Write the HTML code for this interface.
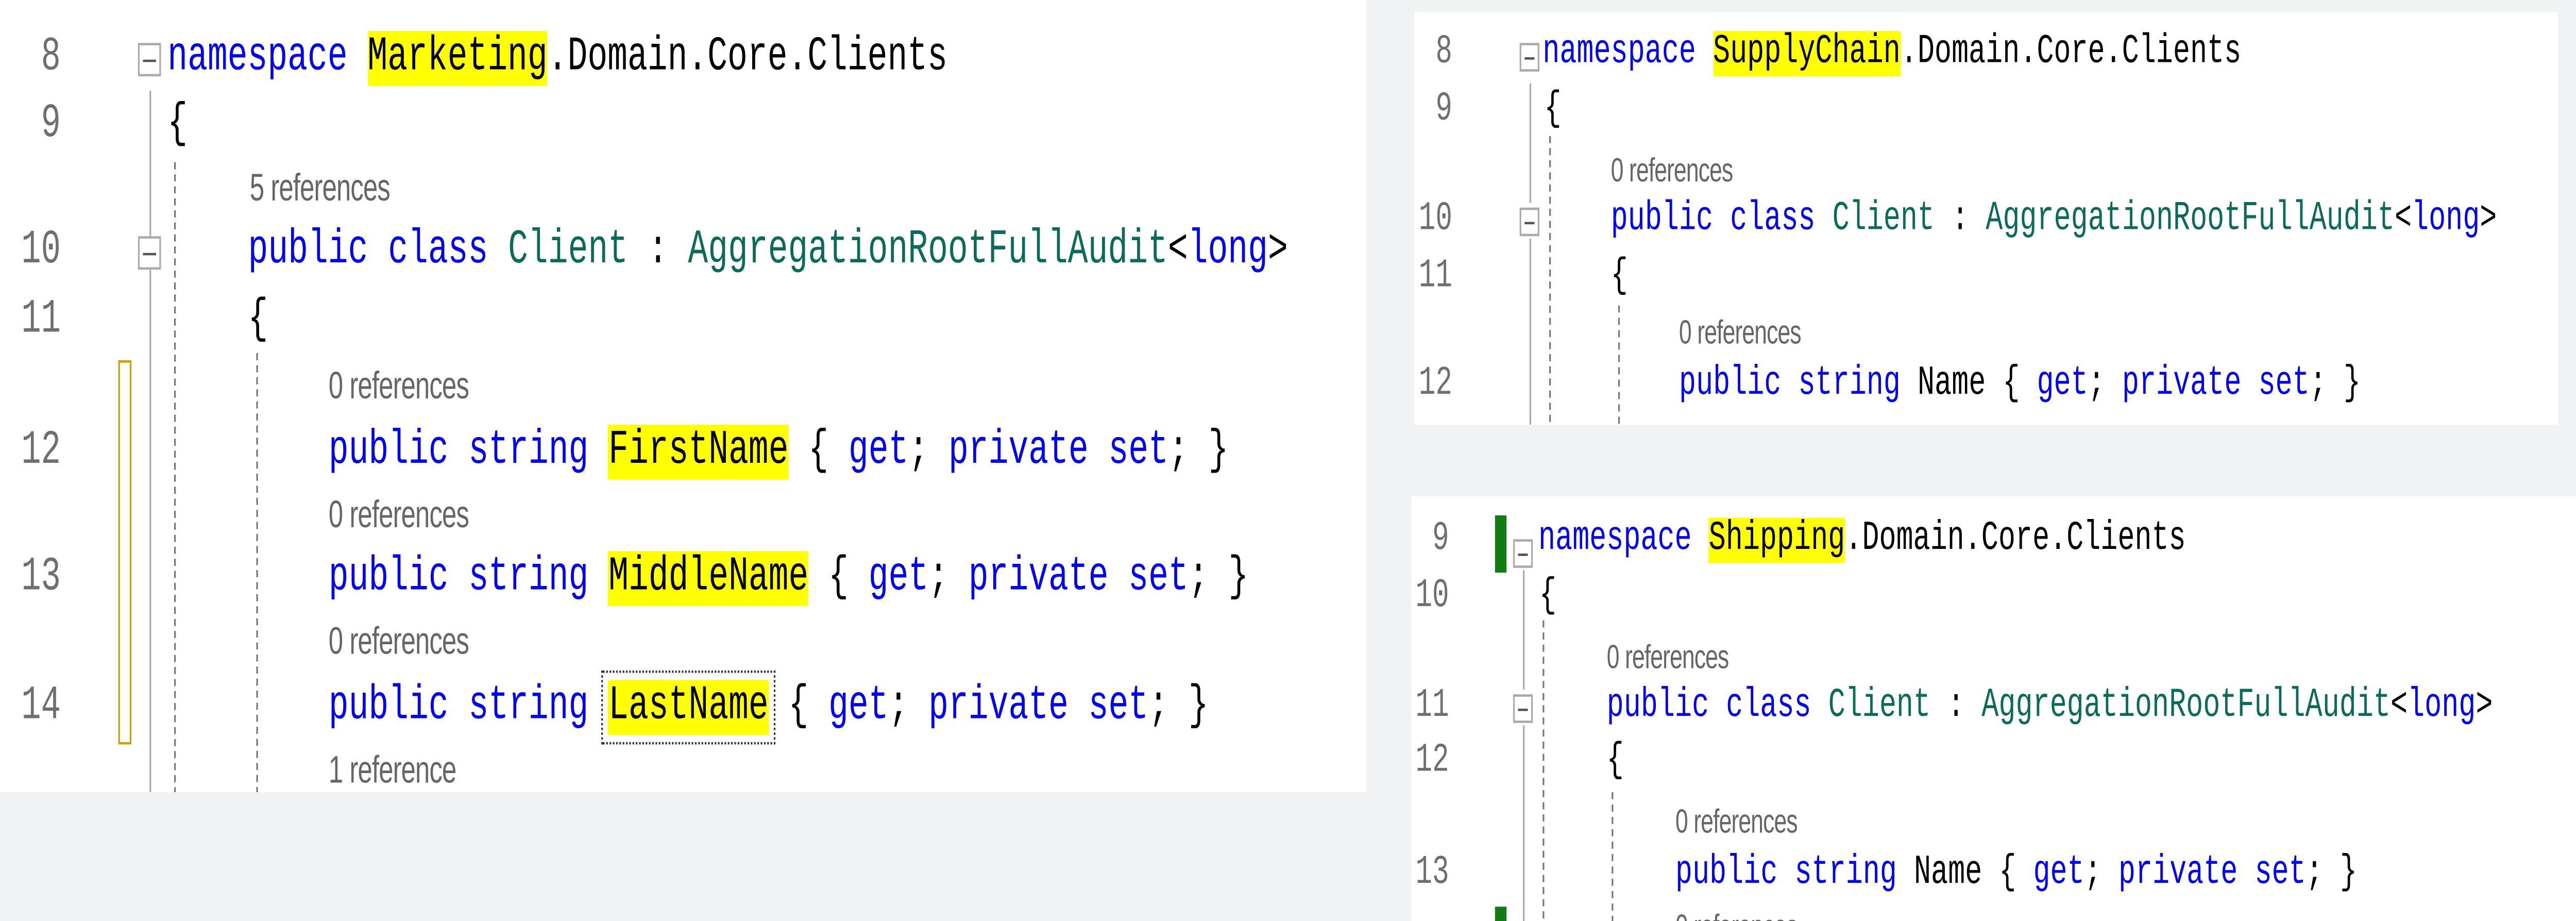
<!DOCTYPE html>
<html><head><meta charset="utf-8"><style>
html,body{margin:0;padding:0;width:100%;height:100%;overflow:hidden;background:#f1f2f4;}
svg.root{position:absolute;left:0;top:0;width:100vw;height:100vh;display:block;}
#s{position:relative;width:1568px;height:386px;background:#f1f2f4;}
.p{position:absolute;background:#fff;overflow:hidden;}
.l{position:absolute;white-space:pre;font-family:"Liberation Mono",monospace;height:30px;line-height:30px;color:#000;}
.L .l{font-size:20.3px;}
.R .l{font-size:17.3px;}
.n{position:absolute;white-space:pre;font-family:"Liberation Mono",monospace;color:#6f6f6f;text-align:right;height:30px;line-height:30px;}
.r{position:absolute;white-space:pre;font-family:"Liberation Sans",sans-serif;color:#666;height:20px;line-height:20px;letter-spacing:-0.3px;}
.k{color:#0000ff}.t{color:#0a6b5a}
.h{background:#ffff00;}
.f{position:absolute;border:1px solid #aaa;background:#fff;box-sizing:border-box;}
.f:after{content:"";position:absolute;left:2px;right:2px;top:50%;height:1px;background:#555;}
.v{position:absolute;width:1px;background:#aaa;}
.d{position:absolute;width:0;border-left:1px dashed #777;}
</style></head><body>
<svg class="root" viewBox="0 0 1568 386" preserveAspectRatio="none" xmlns="http://www.w3.org/2000/svg">
<foreignObject x="0" y="0" width="1568" height="386">
<div xmlns="http://www.w3.org/1999/xhtml" id="s">

<div class="p L" style="left:0;top:0;width:832px;height:332px;">
<div class="n" style="left:0;width:37px;top:-21px;font-size:20px">7</div>
<div class="n" style="left:0;width:37px;top:9.6px;font-size:20px">8</div>
<div class="n" style="left:0;width:37px;top:38px;font-size:20px">9</div>
<div class="n" style="left:0;width:37px;top:91px;font-size:20px">10</div>
<div class="n" style="left:0;width:37px;top:120px;font-size:20px">11</div>
<div class="n" style="left:0;width:37px;top:174.5px;font-size:20px">12</div>
<div class="n" style="left:0;width:37px;top:228px;font-size:20px">13</div>
<div class="n" style="left:0;width:37px;top:281.5px;font-size:20px">14</div>
<div style="position:absolute;left:71.5px;top:150.6px;width:8px;height:161px;border:1.5px solid #c8a200;box-sizing:border-box;"></div>
<div class="v" style="left:91px;top:38px;height:61px"></div>
<div class="v" style="left:91px;top:113px;height:230px"></div>
<div class="f" style="left:84px;top:17.5px;width:14px;height:14px"></div>
<div class="f" style="left:84px;top:99px;width:14px;height:14px"></div>
<div class="d" style="left:106px;top:68px;height:280px"></div>
<div class="d" style="left:156px;top:148px;height:200px"></div>
<div class="l" style="left:102px;top:9.6px"><span class="k">namespace</span> <span class="h">Marketing</span>.Domain.Core.Clients</div>
<div class="l" style="left:102px;top:38px">{</div>
<div class="r" style="left:152px;top:70px;font-size:16px">5 references</div>
<div class="l" style="left:151px;top:91px"><span class="k">public</span> <span class="k">class</span> <span class="t">Client</span> : <span class="t">AggregationRootFullAudit</span>&lt;<span class="k">long</span>&gt;</div>
<div class="l" style="left:151px;top:120px">{</div>
<div class="r" style="left:200px;top:153px;font-size:16px">0 references</div>
<div class="l" style="left:200px;top:174.5px"><span class="k">public</span> <span class="k">string</span> <span class="h">FirstName</span> { <span class="k">get</span>; <span class="k">private</span> <span class="k">set</span>; }</div>
<div class="r" style="left:200px;top:206.6px;font-size:16px">0 references</div>
<div class="l" style="left:200px;top:228px"><span class="k">public</span> <span class="k">string</span> <span class="h">MiddleName</span> { <span class="k">get</span>; <span class="k">private</span> <span class="k">set</span>; }</div>
<div class="r" style="left:200px;top:260px;font-size:16px">0 references</div>
<div class="l" style="left:200px;top:281.5px"><span class="k">public</span> <span class="k">string</span> <span class="h" style="outline:1px dotted #333;outline-offset:3px">LastName</span> { <span class="k">get</span>; <span class="k">private</span> <span class="k">set</span>; }</div>
<div class="r" style="left:200px;top:314px;font-size:16px">1 reference</div>
</div>

<div class="p R" style="left:861px;top:5px;width:696px;height:173px;">
<div class="n" style="left:0;width:23px;top:3.4px;font-size:17px">8</div>
<div class="n" style="left:0;width:23px;top:26.8px;font-size:17px">9</div>
<div class="n" style="left:0;width:23px;top:73px;font-size:17px">10</div>
<div class="n" style="left:0;width:23px;top:96.8px;font-size:17px">11</div>
<div class="n" style="left:0;width:23px;top:142px;font-size:17px">12</div>
<div class="v" style="left:69.5px;top:30px;height:50px"></div>
<div class="v" style="left:69.5px;top:95px;height:90px"></div>
<div class="f" style="left:64px;top:12.5px;width:12px;height:12px"></div>
<div class="f" style="left:64px;top:82px;width:12px;height:12px"></div>
<div class="d" style="left:81.5px;top:52px;height:130px"></div>
<div class="d" style="left:124px;top:123px;height:60px"></div>
<div class="l" style="left:78px;top:3.4px"><span class="k">namespace</span> <span class="h">SupplyChain</span>.Domain.Core.Clients</div>
<div class="l" style="left:79px;top:26.8px">{</div>
<div class="r" style="left:119.5px;top:55.8px;font-size:14px">0 references</div>
<div class="l" style="left:119.5px;top:73px"><span class="k">public</span> <span class="k">class</span> <span class="t">Client</span> : <span class="t">AggregationRootFullAudit</span>&lt;<span class="k">long</span>&gt;</div>
<div class="l" style="left:119.5px;top:96.8px">{</div>
<div class="r" style="left:161px;top:124px;font-size:14px">0 references</div>
<div class="l" style="left:161px;top:142px"><span class="k">public</span> <span class="k">string</span> Name { <span class="k">get</span>; <span class="k">private</span> <span class="k">set</span>; }</div>
</div>

<div class="p R" style="left:859px;top:207.5px;width:709px;height:179px;">
<div class="n" style="left:0;width:23px;top:4.3px;font-size:17px">9</div>
<div class="n" style="left:0;width:23px;top:28.9px;font-size:17px">10</div>
<div class="n" style="left:0;width:23px;top:74.5px;font-size:17px">11</div>
<div class="n" style="left:0;width:23px;top:97.5px;font-size:17px">12</div>
<div class="n" style="left:0;width:23px;top:144px;font-size:17px">13</div>
<div style="position:absolute;left:51px;top:8.5px;width:6.5px;height:24px;background:#127c12"></div>
<div style="position:absolute;left:51px;top:172px;width:6.5px;height:10px;background:#127c12"></div>
<div class="v" style="left:67.5px;top:31px;height:50px"></div>
<div class="v" style="left:67.5px;top:96px;height:90px"></div>
<div class="f" style="left:62px;top:18.5px;width:12px;height:12px"></div>
<div class="f" style="left:62px;top:83.5px;width:12px;height:12px"></div>
<div class="d" style="left:79.5px;top:52px;height:130px"></div>
<div class="d" style="left:121.5px;top:124px;height:60px"></div>
<div class="l" style="left:77.4px;top:4.3px"><span class="k">namespace</span> <span class="h">Shipping</span>.Domain.Core.Clients</div>
<div class="l" style="left:78px;top:28.9px">{</div>
<div class="r" style="left:119px;top:57.5px;font-size:14px">0 references</div>
<div class="l" style="left:119px;top:74.5px"><span class="k">public</span> <span class="k">class</span> <span class="t">Client</span> : <span class="t">AggregationRootFullAudit</span>&lt;<span class="k">long</span>&gt;</div>
<div class="l" style="left:119px;top:97.5px">{</div>
<div class="r" style="left:160.8px;top:126.5px;font-size:14px">0 references</div>
<div class="l" style="left:160.8px;top:144px"><span class="k">public</span> <span class="k">string</span> Name { <span class="k">get</span>; <span class="k">private</span> <span class="k">set</span>; }</div>
<div class="r" style="left:160.8px;top:170px;font-size:14px">0 references</div>
</div>

</div>
</foreignObject>
</svg>
</body></html>
